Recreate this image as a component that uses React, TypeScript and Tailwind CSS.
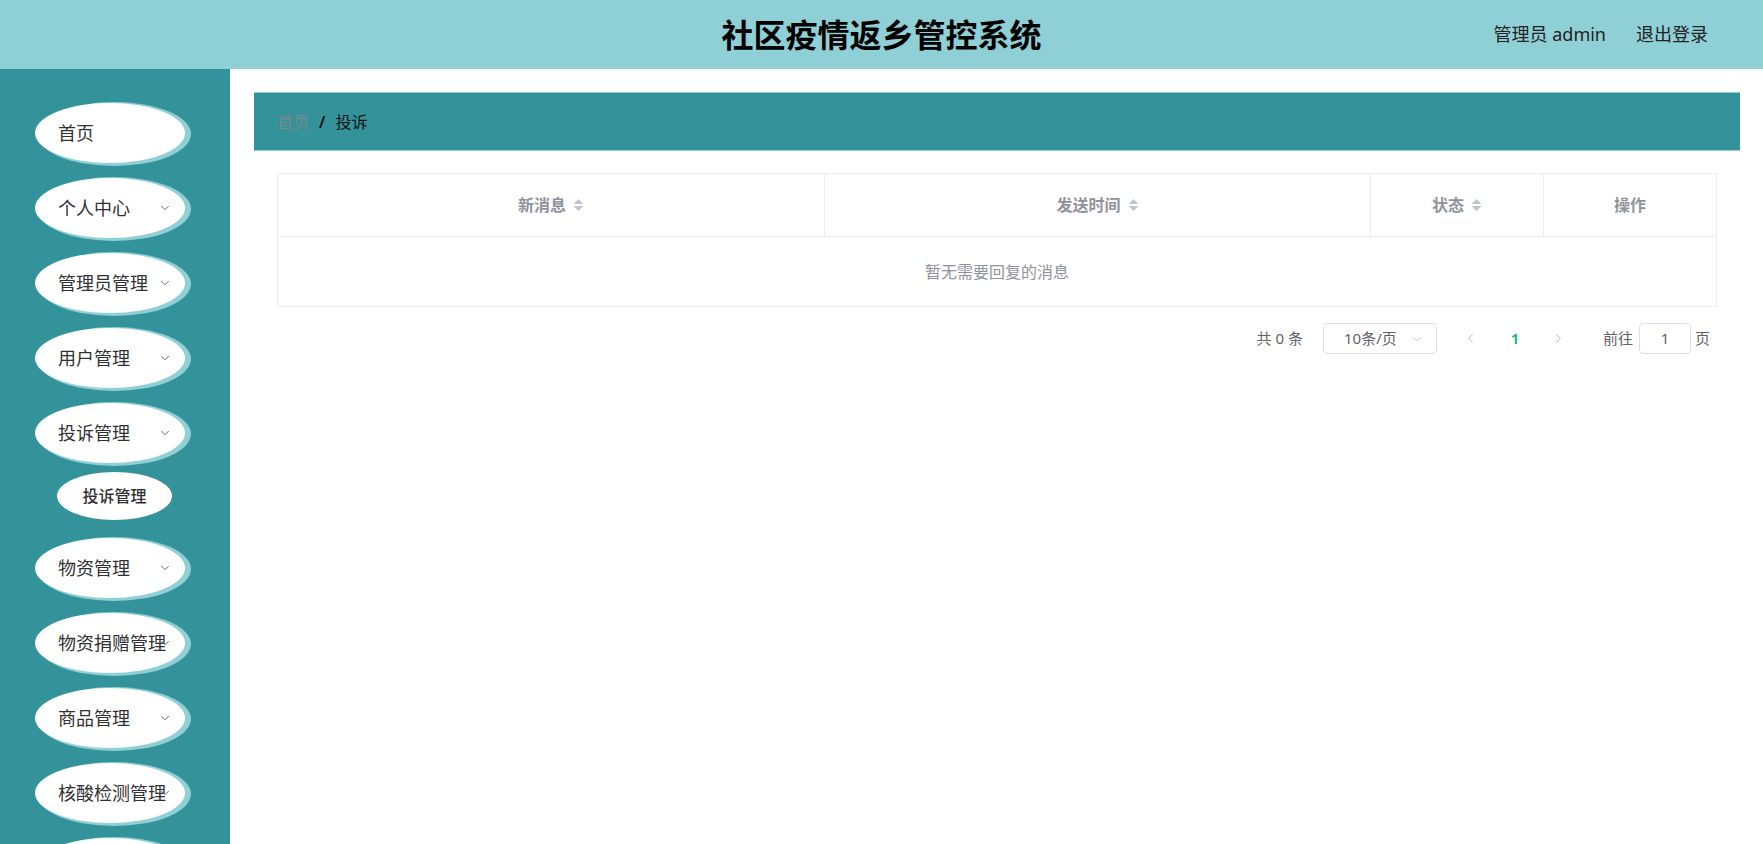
import * as React from "react";
import { ChevronDown, ChevronLeft, ChevronRight } from "lucide-react";

type MenuItem = {
  label: string;
  sub?: boolean;
  arrow?: boolean;
};

const menu: MenuItem[] = [
  { label: "首页" },
  { label: "个人中心", arrow: true },
  { label: "管理员管理", arrow: true },
  { label: "用户管理", arrow: true },
  { label: "投诉管理", arrow: true },
  { label: "投诉管理", sub: true },
  { label: "物资管理", arrow: true },
  { label: "物资捐赠管理", arrow: true },
  { label: "商品管理", arrow: true },
  { label: "核酸检测管理", arrow: true },
  { label: "", arrow: true },
];

function SortCaret() {
  return (
    <svg width="11" height="16" viewBox="0 0 11 16" className="ml-[7px] shrink-0">
      <path d="M0.5 7L5.5 2L10.5 7Z" fill="#c0c4cc" />
      <path d="M0.5 9L5.5 14L10.5 9Z" fill="#c0c4cc" />
    </svg>
  );
}

function MenuPill({ item }: { item: MenuItem }) {
  if (item.sub) {
    return (
      <div className="ml-[57px] -mt-[6px] mb-[18px] w-[115px] h-[48px] shrink-0 rounded-[50%] bg-white flex items-center justify-center text-[16px] font-medium text-[#303133]">
        {item.label}
      </div>
    );
  }
  return (
    <div className="relative ml-[35px] mb-[15px] w-[150px] h-[60px] shrink-0 rounded-[50%] bg-white shadow-[4px_1px_0_2px_#8fd0d7] flex items-center pl-[23px] text-[18px] text-[#303133] whitespace-nowrap">
      <span>{item.label}</span>
      {item.arrow && (
        <ChevronDown
          size={14}
          strokeWidth={1.6}
          className="absolute right-[13px] top-1/2 -translate-y-1/2 text-[#606266]"
        />
      )}
    </div>
  );
}

export default function App() {
  const cols = [
    { label: "新消息", w: "w-[547px]", sort: true },
    { label: "发送时间", w: "w-[546px]", sort: true },
    { label: "状态", w: "w-[173px]", sort: true },
    { label: "操作", w: "flex-1", sort: false },
  ];

  return (
    <div
      className="h-screen w-full flex flex-col bg-white overflow-hidden"
      style={{ fontFamily: '"Noto Sans", "Noto Sans CJK SC", sans-serif' }}
    >
      <header className="h-[69px] shrink-0 bg-[#8fd0d7] grid grid-cols-[1fr_auto_1fr] items-center">
        <div />
        <h1 className="text-[32px] font-bold text-black leading-none">社区疫情返乡管控系统</h1>
        <div className="flex justify-end gap-[30px] pr-[55px] text-[18px] text-[#222]">
          <span>管理员 admin</span>
          <span>退出登录</span>
        </div>
      </header>

      <div className="flex flex-1 min-h-0">
        <aside className="w-[230px] shrink-0 bg-[#33929a] pt-[34px] overflow-hidden flex flex-col">
          {menu.map((m, i) => (
            <MenuPill key={i} item={m} />
          ))}
        </aside>

        <main className="flex-1 pl-[24px] pr-[23px] pt-[23px]">
          <div className="h-[59px] bg-[#33929a] border-y border-[#8fd0d7] flex items-center pl-[23px] text-[16px]">
            <span className="text-[#76898b]">首页</span>
            <span className="mx-[10px] text-[#111] font-semibold">/</span>
            <span className="text-[#111]">投诉</span>
          </div>

          <div className="mx-[23px] mt-[22px]">
            <div className="border border-[#ebeef5]">
              <div className="flex h-[63px] border-b border-[#ebeef5]">
                {cols.map((c, i) => (
                  <div
                    key={c.label}
                    className={`${c.w} flex items-center justify-center text-[16px] font-bold text-[#909399] ${i < cols.length - 1 ? "border-r border-[#ebeef5]" : ""}`}
                  >
                    <span>{c.label}</span>
                    {c.sort && <SortCaret />}
                  </div>
                ))}
              </div>
              <div className="h-[69px] flex items-center justify-center text-[16px] text-[#909399]">
                暂无需要回复的消息
              </div>
            </div>

            <div className="mt-[16px] pr-[7px] flex justify-end items-center text-[15px] text-[#606266]">
              <span className="mr-[20px]">共 0 条</span>
              <div className="relative w-[114px] h-[31px] border border-[#dcdfe6] rounded-[4px] flex items-center pl-[20px]">
                <span>10条/页</span>
                <ChevronDown size={14} strokeWidth={1.5} className="absolute right-[12px] top-1/2 -translate-y-1/2 text-[#c0c4cc]" />
              </div>
              <div className="ml-[12px] flex items-center">
                <div className="w-[44px] h-[31px] flex items-center justify-center text-[#b0b3b9]">
                  <ChevronLeft size={15} strokeWidth={1.5} />
                </div>
                <div className="w-[44px] h-[31px] flex items-center justify-center text-[#1fb98f] font-bold">1</div>
                <div className="w-[44px] h-[31px] flex items-center justify-center text-[#b0b3b9]">
                  <ChevronRight size={15} strokeWidth={1.5} />
                </div>
              </div>
              <span className="ml-[22px]">前往</span>
              <div className="ml-[6px] w-[52px] h-[31px] border border-[#dcdfe6] rounded-[4px] flex items-center justify-center">
                1
              </div>
              <span className="ml-[4px]">页</span>
            </div>
          </div>
        </main>
      </div>
    </div>
  );
}
